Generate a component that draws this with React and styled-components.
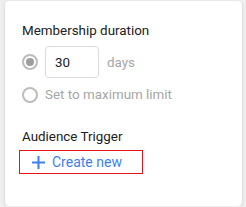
import React from "react";
import styled, { createGlobalStyle } from "styled-components";

const GlobalStyle = createGlobalStyle`
  html, body {
    margin: 0;
    padding: 0;
    background: #efefef;
    font-family: Roboto, "Liberation Sans", Arial, sans-serif;
  }
`;

const Card = styled.section`
  box-sizing: border-box;
  margin: 1px 0 0 5px;
  width: 237px;
  height: 205px;
  background: #ffffff;
  border-radius: 4px;
  box-shadow: 0 1px 3px rgba(0, 0, 0, 0.18);
  padding: 21px 0 0 17px;
`;

const Heading = styled.h3`
  margin: 0;
  font-size: 13.4px;
  line-height: 17px;
  font-weight: 400;
  color: #202124;
`;

const OptionRow = styled.label`
  display: flex;
  align-items: center;
  gap: 7px;
  margin-top: ${(p) => p.$top}px;
  font-size: 13.4px;
  line-height: 17px;
  color: #a6a6a6;
`;

const Radio = styled.span`
  box-sizing: border-box;
  width: 16px;
  height: 16px;
  border-radius: 50%;
  border: 2px solid #bdbdbd;
  display: flex;
  align-items: center;
  justify-content: center;
  flex-shrink: 0;

  &::after {
    content: "";
    width: 8px;
    height: 8px;
    border-radius: 50%;
    background: ${(p) => (p.$checked ? "#9e9e9e" : "transparent")};
  }
`;

const NumberBox = styled.div`
  box-sizing: border-box;
  width: 54px;
  height: 32px;
  border: 1px solid #dadce0;
  border-radius: 4px;
  padding-left: 9px;
  display: flex;
  align-items: center;
  color: #202124;
`;

const Unit = styled.span`
  margin-left: 1px;
`;

const CreateButton = styled.button`
  box-sizing: border-box;
  margin: 5px 0 0 -3px;
  width: 124px;
  height: 24px;
  border: 1px solid #e8141b;
  background: transparent;
  display: flex;
  align-items: center;
  gap: 7px;
  padding: 0 0 0 12px;
  font-family: Roboto, "Liberation Sans", Arial, sans-serif;
  font-size: 14px;
  color: #3d7ff0;
  cursor: pointer;
`;

const Section = styled.div`
  margin-top: ${(p) => p.$top}px;
`;

function PlusIcon() {
  return (
    <svg width="13" height="13" viewBox="0 0 13 13">
      <path d="M6.5 0v13M0 6.5h13" stroke="#3d7ff0" strokeWidth="2" />
    </svg>
  );
}

export default function App() {
  return (
    <>
      <GlobalStyle />
      <Card>
        <Heading>Membership duration</Heading>
        <OptionRow $top={7}>
          <Radio $checked />
          <NumberBox>30</NumberBox>
          <Unit>days</Unit>
        </OptionRow>
        <OptionRow $top={8}>
          <Radio />
          <span>Set to maximum limit</span>
        </OptionRow>
        <Section $top={25}>
          <Heading>Audience Trigger</Heading>
          <CreateButton>
            <PlusIcon />
            Create new
          </CreateButton>
        </Section>
      </Card>
    </>
  );
}
